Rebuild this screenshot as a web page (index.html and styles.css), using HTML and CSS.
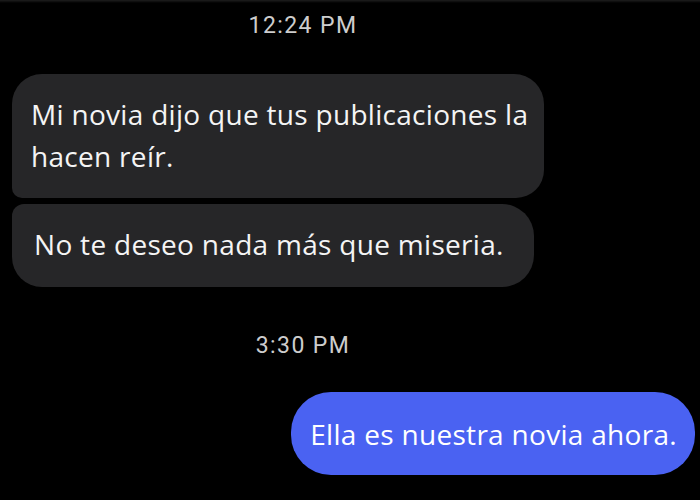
FILE: index.html
```html
<!DOCTYPE html>
<html lang="es">
<head>
<meta charset="utf-8">
<title>Chat</title>
<link rel="stylesheet" href="styles.css">
</head>
<body>
<main class="chat">
  <div class="ts ts-first">12:24 PM</div>
  <div class="group group-in">
    <div class="bubble bubble-in bubble-top">Mi novia dijo que tus publicaciones la<br>hacen reír.</div>
    <div class="bubble bubble-in bubble-bottom bubble-wide">No te deseo nada más que miseria.</div>
  </div>
  <div class="ts ts-second">3:30 PM</div>
  <div class="bubble bubble-out">Ella es nuestra novia ahora.</div>
</main>
</body>
</html>
```

FILE: styles.css
```css
html, body {
  margin: 0;
  padding: 0;
}

body {
  width: 700px;
  height: 500px;
  overflow: hidden;
  background: linear-gradient(#1e1e1e 0, #000 3px) #000;
}

.chat {
  display: flex;
  flex-direction: column;
  align-items: flex-start;
  padding: 12px 5px 0 12px;
}

.ts {
  align-self: stretch;
  margin-right: 101px;
  text-align: center;
  font-family: Roboto, "Liberation Sans", sans-serif;
  font-size: 23px;
  line-height: 27px;
  letter-spacing: 1.4px;
  color: #cdcdcd;
}

.ts-second {
  margin-top: 45px;
}

.group {
  display: flex;
  flex-direction: column;
  align-items: flex-start;
  gap: 6px;
  margin-top: 35px;
}

.bubble {
  font-family: "Open Sans", "Noto Sans", sans-serif;
  font-size: 28px;
  line-height: 42px;
  letter-spacing: 0.3px;
  color: #f4f4f4;
  white-space: nowrap;
}

.bubble-in {
  background: #262628;
}

.bubble-top {
  padding: 19px 16px 21px 19px;
  border-radius: 30px 30px 28px 10px;
}

.bubble-bottom {
  padding: 19px 30px 22px 22px;
  border-radius: 12px 32px 32px 30px;
}

.bubble-out {
  align-self: flex-end;
  margin-top: 33px;
  padding: 21px 18px 20px 19px;
  background: #4a62f2;
  color: #ffffff;
  border-radius: 40px;
}
```
